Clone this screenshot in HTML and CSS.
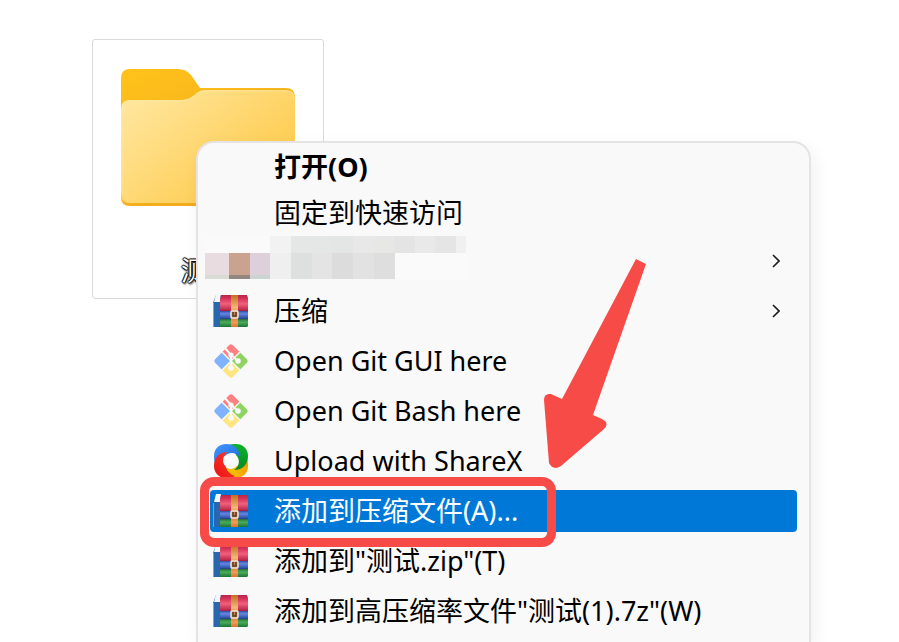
FILE: index.html
```html
<!DOCTYPE html>
<html lang="zh-CN">
<head>
    <meta charset="UTF-8">
    <meta name="viewport" content="width=device-width, initial-scale=1.0">
    <title>测试</title>
    <link rel="stylesheet" href="styles.css">
</head>
<body>
    <!-- shared icons -->
    <svg class="sprite" aria-hidden="true">
        <defs>
            <linearGradient id="folder-back" x1="0" y1="0" x2="0.6" y2="1">
                <stop offset="0" stop-color="#ffc21a"/>
                <stop offset="1" stop-color="#f2a81f"/>
            </linearGradient>
            <linearGradient id="folder-front" x1="0" y1="0" x2="1" y2="0.8">
                <stop offset="0" stop-color="#ffe8a4"/>
                <stop offset="1" stop-color="#fec843"/>
            </linearGradient>
            <linearGradient id="rar-red" x1="0" y1="0" x2="0" y2="1">
                <stop offset="0" stop-color="#b5264a"/>
                <stop offset="0.2" stop-color="#d22f55"/>
                <stop offset="0.55" stop-color="#f0607c"/>
                <stop offset="1" stop-color="#b41f42"/>
            </linearGradient>
            <linearGradient id="rar-blue" x1="0" y1="0" x2="0" y2="1">
                <stop offset="0" stop-color="#3457b8"/>
                <stop offset="0.35" stop-color="#6486e0"/>
                <stop offset="1" stop-color="#23439c"/>
            </linearGradient>
            <linearGradient id="rar-green" x1="0" y1="0" x2="0" y2="1">
                <stop offset="0" stop-color="#237a38"/>
                <stop offset="0.4" stop-color="#4cab5b"/>
                <stop offset="1" stop-color="#1d7434"/>
            </linearGradient>
            <linearGradient id="rar-belt" x1="0" y1="0" x2="0" y2="1">
                <stop offset="0" stop-color="#c06f22"/>
                <stop offset="0.4" stop-color="#f5b877"/>
                <stop offset="0.65" stop-color="#cf741f"/>
                <stop offset="0.85" stop-color="#f39a5c"/>
                <stop offset="1" stop-color="#d9762c"/>
            </linearGradient>
            <linearGradient id="sx-blue" x1="0" y1="0" x2="1" y2="1">
                <stop offset="0" stop-color="#4596fb"/>
                <stop offset="1" stop-color="#1768d8"/>
            </linearGradient>
            <linearGradient id="sx-green" x1="0" y1="0" x2="1" y2="0">
                <stop offset="0" stop-color="#0bb32d"/>
                <stop offset="1" stop-color="#078a20"/>
            </linearGradient>
            <linearGradient id="sx-yellow" x1="0" y1="0" x2="1" y2="0">
                <stop offset="0" stop-color="#f0a000"/>
                <stop offset="1" stop-color="#ffd000"/>
            </linearGradient>
            <linearGradient id="sx-red" x1="0" y1="0" x2="1" y2="1">
                <stop offset="0" stop-color="#e81010"/>
                <stop offset="1" stop-color="#ff4032"/>
            </linearGradient>
        </defs>
        <symbol id="icon-rar" viewBox="0 0 36 34">
            <path d="M3 1h6l-2 8v24H0V9z" fill="#2866ae"/>
            <path d="M0 9h1v24H0z" fill="#7fa3cc"/>
            <path d="M3 0h5l-1 8H1z" fill="#f4f6fa"/>
            <path d="M8 1h26l1 3v13H7V5z" fill="url(#rar-red)"/>
            <path d="M7 17h28v8H7z" fill="url(#rar-blue)"/>
            <path d="M7 25h28v7l-1 1H7z" fill="url(#rar-green)"/>
            <path d="M7 17h28M7 25h28" stroke="#342850" stroke-opacity=".3"/>
            <path d="M18 1h7v32h-7z" fill="url(#rar-belt)"/>
            <rect x="18" y="17" width="7" height="7" rx="1" fill="#c08248" stroke="#eee3d8" stroke-width="1.500"/>
            <path d="M20 18v4h3v-4" fill="none" stroke="#5a3c28" stroke-width="1.500"/>
        </symbol>
        <symbol id="icon-git" viewBox="0 0 36 36">
            <g transform="rotate(45 18 18)">
                <path d="M8 5.500h9.500v12H5.500V8q0-2.500 2.500-2.500z" fill="#ff8080"/>
                <path d="M18.500 5.500H28q2.500 0 2.500 2.500v9.500h-12z" fill="#8fd461"/>
                <path d="M18.500 18.500h12V28q0 2.500-2.500 2.500h-9.500z" fill="#ffe680"/>
                <path d="M5.500 18.500h12v12H8q-2.500 0-2.500-2.500z" fill="#80b3ff"/>
            </g>
            <g transform="rotate(45 18 18)" fill="none" stroke="#f9f9f9">
                <path d="M18 5v26M5 18h26" stroke-width="1.200"/>
            </g>
            <path d="M12 5l6 7v13M18 12l7 6" fill="none" stroke="#f9f9f9" stroke-width="2"/>
            <circle cx="18" cy="12" r="2.600" fill="#f9f9f9"/>
            <circle cx="25" cy="18" r="2.800" fill="#f9f9f9"/>
            <circle cx="18" cy="25" r="2.800" fill="#f9f9f9"/>
        </symbol>
        <symbol id="icon-sharex" viewBox="0 0 36 36">
            <path d="M1 13C1 5 7 1 13 1c8 0 14 5 14 14-3-5-10-7-15-2-5 1-8 6-9 9-2-3-2-6-2-9z" fill="url(#sx-yellow)" transform="rotate(180 18 18)"/>
            <path d="M1 13C1 5 7 1 13 1c8 0 14 5 14 14-3-5-10-7-15-2-5 1-8 6-9 9-2-3-2-6-2-9z" fill="url(#sx-green)" transform="rotate(90 18 18)"/>
            <path d="M1 13C1 5 7 1 13 1c8 0 14 5 14 14-3-5-10-7-15-2-5 1-8 6-9 9-2-3-2-6-2-9z" fill="url(#sx-blue)"/>
            <path d="M1 13C1 5 7 1 13 1c8 0 14 5 14 14-3-5-10-7-15-2-5 1-8 6-9 9-2-3-2-6-2-9z" fill="url(#sx-red)" transform="rotate(270 18 18)"/>
        </symbol>
        <symbol id="icon-chevron" viewBox="0 0 8 14">
            <path d="M1 1l6 6-6 6" fill="none" stroke="#1c1c1c" stroke-width="1.600"/>
        </symbol>
    </svg>

    <main class="desktop">
        <a class="folder" href="#">
            <svg class="folder-icon" viewBox="0 0 174 138" aria-hidden="true">
                <path d="M9 0h48q8 0 13 6l9 13h86q9 0 9 9v100q0 9-9 9H9q-9 0-9-9V9q0-9 9-9z" fill="url(#folder-back)"/>
                <path d="M9 31h50q8 0 13-4l5-4q3-2 7-2h81q9 0 9 9v95q0 9-9 9H9q-9 0-9-9V40q0-9 9-9z" fill="url(#folder-front)"/>
                <path d="M1 125V40q0-8 8-8h50q8 0 13-4l5-4q3-2 7-2h81q8 0 8 8" fill="none" stroke="#ffeaa5" stroke-opacity=".7"/>
            </svg>
            <span class="folder-name">测试</span>
        </a>

        <ul class="menu">
            <li><button class="item item-plain item-default">打开(O)</button></li>
            <li><button class="item item-plain">固定到快速访问</button></li>
            <li>
                <button class="item item-hidden" aria-label="子菜单">
                    <svg class="mosaic" viewBox="0 0 261 43" aria-hidden="true">
                        <path d="M0 0h65v17H0z" fill="#fafafa"/>
                        <path d="M65 0h21v17H65z" fill="#f2f2f2"/>
                        <path d="M86 0h41v17H86z" fill="#e5e7e6"/>
                        <path d="M127 0h21v17h-21z" fill="#e4e5e5"/>
                        <path d="M148 0h21v17h-21z" fill="#e8e8e8"/>
                        <path d="M169 0h41v17h-41z" fill="#e7e7e6"/>
                        <path d="M189 0h21v17h-21z" fill="#e4e4e4"/>
                        <path d="M210 0h20v17h-20z" fill="#e9e9e9"/>
                        <path d="M230 0h21v17h-21z" fill="#e5e5e5"/>
                        <path d="M251 0h10v17h-10z" fill="#f0f0f0"/>
                        <path d="M0 17h24v22H0z" fill="#e9dce0"/>
                        <path d="M24 17h21v22H24z" fill="#c9a290"/>
                        <path d="M45 17h20v22H45z" fill="#ddd0db"/>
                        <path d="M65 17h21v26H65z" fill="#efefef"/>
                        <path d="M86 17h21v26H86z" fill="#dedfdf"/>
                        <path d="M107 17h20v26h-20z" fill="#e4e4e4"/>
                        <path d="M127 17h21v26h-21z" fill="#dcdcdc"/>
                        <path d="M148 17h21v26h-21z" fill="#e2e2e2"/>
                        <path d="M169 17h21v26h-21z" fill="#dedede"/>
                        <path d="M0 39h24v4H0z" fill="#d9dbd5"/>
                        <path d="M24 39h21v4H24z" fill="#93867e"/>
                        <path d="M45 39h20v4H45z" fill="#cbd4d1"/>
                        <path d="M190 17h71v26h-71z" fill="#fafafa"/>
                    </svg>
                    <svg class="chevron"><use href="#icon-chevron"/></svg>
                </button>
            </li>
            <li>
                <button class="item">
                    <svg class="icon icon-rar"><use href="#icon-rar"/></svg>
                    <span>压缩</span>
                    <svg class="chevron"><use href="#icon-chevron"/></svg>
                </button>
            </li>
            <li>
                <button class="item">
                    <svg class="icon"><use href="#icon-git"/></svg>
                    <span>Open Git GUI here</span>
                </button>
            </li>
            <li>
                <button class="item">
                    <svg class="icon"><use href="#icon-git"/></svg>
                    <span>Open Git Bash here</span>
                </button>
            </li>
            <li>
                <button class="item">
                    <svg class="icon"><use href="#icon-sharex"/></svg>
                    <span>Upload with ShareX</span>
                </button>
            </li>
            <li class="marked">
                <button class="item item-active">
                    <svg class="icon icon-rar"><use href="#icon-rar"/></svg>
                    <span>添加到压缩文件(A)...</span>
                </button>
            </li>
            <li>
                <button class="item">
                    <svg class="icon icon-rar"><use href="#icon-rar"/></svg>
                    <span>添加到"测试.zip"(T)</span>
                </button>
            </li>
            <li>
                <button class="item">
                    <svg class="icon icon-rar"><use href="#icon-rar"/></svg>
                    <span>添加到高压缩率文件"测试(1).7z"(W)</span>
                </button>
            </li>
        </ul>

        <svg class="arrow" viewBox="0 0 104 212" aria-hidden="true">
            <path d="M93 1l10 5L50 157l9 4q8 4 2 10L18 208q-8 5-12-3L1 142q0-7 7-6l11 5z" fill="#f74b48"/>
        </svg>
    </main>
</body>
</html>
```
FILE: styles.css
```css
*,
*::after {
    box-sizing: border-box;
}
body {
    margin: 0;
    background-color: #fff;
    font-family: "Noto Sans", "Noto Sans CJK SC", sans-serif;
    font-size: 27px;
    color: #000;
}
.sprite {
    position: absolute;
    width: 0;
    height: 0;
}
.desktop {
    position: relative;
    min-height: 100vh;
    padding: 39px 92px;
    overflow: hidden;
}

/* folder */
.folder {
    display: inline-flex;
    flex-direction: column;
    align-items: center;
    gap: 44px;
    padding: 29px 28px 7px;
    border: 1px solid #d9d9d9;
    border-radius: 3px;
    text-decoration: none;
}
.folder-icon {
    width: 174px;
    height: 138px;
}
.folder-name {
    line-height: 40px;
    color: #fff;
    text-shadow: 1px 0 1px #000, -1px 0 1px #000, 0 1px 1px #000, 0 -1px 1px #000, 1px 2px 2px #555;
}

/* context menu */
.menu {
    position: absolute;
    top: 141px;
    left: 196px;
    right: 88px;
    display: flex;
    flex-direction: column;
    gap: 8px;
    margin: 0;
    padding: 5px 12px 10px;
    list-style: none;
    background-color: #f9f9f9;
    border: 2px solid #e4e4e4;
    border-bottom: none;
    border-radius: 18px 18px 0 0;
    box-shadow: 4px 6px 18px rgba(0, 0, 0, 0.06);
}
.item {
    position: relative;
    display: flex;
    align-items: center;
    gap: 25px;
    width: 100%;
    height: 42px;
    padding: 0 17px 0 3px;
    border: none;
    border-radius: 4px;
    background: none;
    font: inherit;
    line-height: 40px;
    color: inherit;
    text-align: left;
    white-space: nowrap;
}
.item-plain {
    height: 38px;
    padding-left: 64px;
}
.item-default {
    font-weight: bold;
}
.item-active {
    background-color: #0078d7;
    color: #fff;
}
.icon {
    width: 36px;
    height: 36px;
    flex: none;
}
.icon-rar {
    height: 34px;
}
.chevron {
    width: 8px;
    height: 14px;
    margin-left: auto;
}
.mosaic {
    position: absolute;
    top: -4px;
    left: -5px;
    width: 261px;
    height: 43px;
}

/* red marks */
.marked {
    position: relative;
}
.marked::after {
    content: "";
    position: absolute;
    z-index: 1;
    top: -13px;
    left: -10px;
    width: 356px;
    height: 70px;
    border: 9px solid #f74b48;
    border-radius: 14px;
    pointer-events: none;
}
.arrow {
    position: absolute;
    top: 258px;
    left: 543px;
    width: 104px;
    height: 212px;
    pointer-events: none;
}
```
